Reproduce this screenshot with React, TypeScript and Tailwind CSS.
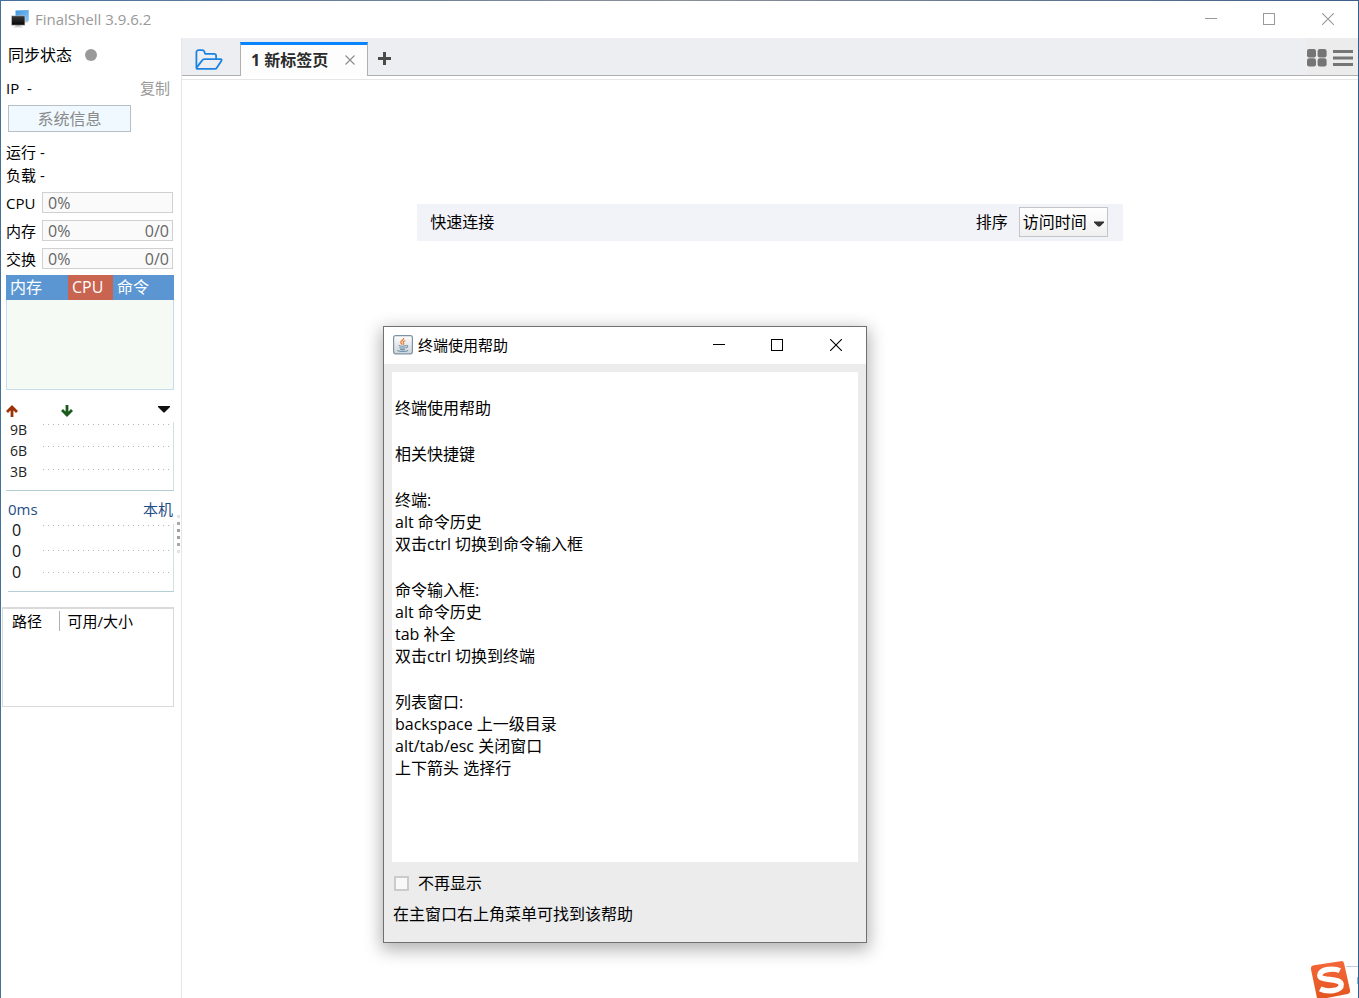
import React from 'react';

const HELP_GROUPS: string[][] = [
  ['终端使用帮助'],
  ['相关快捷键'],
  ['终端:', 'alt 命令历史', '双击ctrl 切换到命令输入框'],
  ['命令输入框:', 'alt 命令历史', 'tab 补全', '双击ctrl 切换到终端'],
  ['列表窗口:', 'backspace 上一级目录', 'alt/tab/esc 关闭窗口', '上下箭头 选择行'],
];

function MinimizeIcon() {
  return (
    <svg width="12" height="12" viewBox="0 0 12 12" aria-hidden="true" shapeRendering="crispEdges">
      <path d="M0 5.5h12" stroke="currentColor" />
    </svg>
  );
}

function MaximizeIcon() {
  return (
    <svg width="12" height="12" viewBox="0 0 12 12" aria-hidden="true" shapeRendering="crispEdges">
      <rect x="0.5" y="0.5" width="11" height="11" fill="none" stroke="currentColor" />
    </svg>
  );
}

function CloseIcon() {
  return (
    <svg width="12" height="12" viewBox="0 0 12 12" aria-hidden="true">
      <path d="M0 0l12 12M12 0L0 12" stroke="currentColor" strokeWidth="1.1" />
    </svg>
  );
}

function WindowControls({ title }: { title: string }) {
  return (
    <div className="flex h-full">
      <button type="button" aria-label={`最小化 ${title}`} className="flex w-[58px] items-center justify-center">
        <MinimizeIcon />
      </button>
      <button type="button" aria-label={`最大化 ${title}`} className="flex w-[58px] items-center justify-center">
        <MaximizeIcon />
      </button>
      <button type="button" aria-label={`关闭 ${title}`} className="flex w-[60px] items-center justify-center">
        <CloseIcon />
      </button>
    </div>
  );
}

function AppLogo() {
  return (
    <svg width="18" height="18" viewBox="0 0 18 18" aria-hidden="true">
      <defs>
        <linearGradient id="backScreen" x1="0" y1="0" x2="1" y2="1">
          <stop offset="0" stopColor="#3f93dc" />
          <stop offset="1" stopColor="#8cc8f5" />
        </linearGradient>
        <linearGradient id="frontScreen" x1="0" y1="0" x2="0" y2="1">
          <stop offset="0" stopColor="#3a3a3a" />
          <stop offset="1" stopColor="#050505" />
        </linearGradient>
      </defs>
      <path d="M4.5 0.6L17.8 0v11.2L14 11.6 4.5 10z" fill="url(#backScreen)" />
      <path d="M14 11.4h3v1h-3z" fill="#b5b5b5" />
      <path d="M0.5 5.8h13.4v9.4H0.5z" fill="url(#frontScreen)" stroke="#dadada" strokeWidth="0.5" />
      <path d="M5 15.3h4l1 1.2H4z" fill="#9a9a9a" />
      <path d="M2.5 17h9.5" stroke="#d4d4d4" />
    </svg>
  );
}

function FolderIcon() {
  return (
    <svg width="28" height="22" viewBox="0 0 28 22" fill="none" stroke="#1c84e0" strokeWidth="1.8" strokeLinejoin="round" strokeLinecap="round" aria-hidden="true">
      <path d="M1.4 18.2V3.200a2 2 0 0 1 2-2h3.800c1.200 0 1.900 0.600 2.200 1.500l0.700 2.100h9a2 2 0 0 1 2 2v3" />
      <path d="M9.600 10.200h16c1 0 1.400 0.700 0.800 1.500l-4.700 7.300a2 2 0 0 1-1.600 0.900H2.600c-1 0-1.400-0.700-0.800-1.500l5.200-6.800A3 3 0 0 1 9.600 10.200z" />
    </svg>
  );
}

function GridIcon() {
  return (
    <svg width="20" height="18" viewBox="0 0 20 18" fill="#757575" aria-hidden="true">
      <rect x="0" y="0" width="9" height="8.4" rx="2.2" />
      <rect x="10.6" y="0" width="9" height="8.4" rx="2.2" />
      <rect x="0" y="9.2" width="9" height="8.2" rx="2.2" />
      <rect x="10.6" y="9.2" width="9" height="8.2" rx="2.2" />
    </svg>
  );
}

function MenuIcon() {
  return (
    <svg width="20" height="16" viewBox="0 0 20 16" fill="#757575" aria-hidden="true">
      <path d="M0 0h20v3H0zM0 6.500h20v3H0zM0 13h20v3H0z" />
    </svg>
  );
}

function JavaIcon() {
  return (
    <svg width="20" height="20" viewBox="0 0 20 20" fill="none" aria-hidden="true">
      <defs>
        <linearGradient id="javaTile" x1="0" y1="0" x2="0" y2="1">
          <stop offset="0" stopColor="#fdfdfd" />
          <stop offset="1" stopColor="#cfd5da" />
        </linearGradient>
      </defs>
      <rect x="0.6" y="0.6" width="18.8" height="18.2" rx="2" fill="url(#javaTile)" stroke="#7d93a5" strokeWidth="1.2" />
      <path d="M10.6 3c0.7 1.8-2.8 2.5-2.8 4.3 0 1.1 1 1.5 1.3 2.3M12.3 5.6c-2 0.7-2.8 1.5-1.8 2.6 0.6 0.7 0 1.2-0.4 1.6" stroke="#e8813a" strokeWidth="1.3" />
      <path d="M5.6 10.6c2.4 0.8 5.6 0.8 7.6 0M6.4 12.5c2 0.7 4.4 0.7 6.2 0M7 14.2c1.6 0.5 3.4 0.5 5 0M13.4 10.5c1.8-0.3 1.9 1.7-0.4 2.4M4.4 15.4c2.4 1.3 8.4 1.3 10.8 0" stroke="#6f92ab" strokeWidth="1.1" />
    </svg>
  );
}

function ImeBadge() {
  return (
    <svg width="49" height="38" viewBox="0 0 49 38" aria-hidden="true">
      <defs>
        <linearGradient id="imeTile" x1="0" y1="0" x2="0" y2="1">
          <stop offset="0" stopColor="#f4673a" />
          <stop offset="1" stopColor="#e4561f" />
        </linearGradient>
      </defs>
      <path d="M30 6.5h19V38H30z" fill="#fff" />
      <path d="M36 6.5h13" stroke="#b9cfe6" />
      <path d="M49 17h-1.500v7H49z" fill="#1a7fe0" />
      <path d="M4 5.2L30.500 1.200a3 3 0 0 1 3.600 2.200L40 30a3.400 3.400 0 0 1-2.600 4L17 38H7L1 9.400a3.600 3.600 0 0 1 3-4.200z" fill="url(#imeTile)" />
      <path d="M29.800 10.600C24 7.800 10.500 9 9.800 15.200C9.200 21.500 31 17.400 31.200 24.600C31.400 31.200 17 32.400 10.200 28.800" fill="none" stroke="#fff" strokeWidth="5.400" />
    </svg>
  );
}

function Arrow({ up }: { up: boolean }) {
  return (
    <svg width="12" height="12" viewBox="0 0 12 12" fill="none" stroke={up ? '#9c3206' : '#1b5a1b'} strokeWidth="2.800" aria-hidden="true">
      {up ? <path d="M6 12V2.500M1 7L6 2l5 5" /> : <path d="M6 0v9.500M1 5l5 5 5-5" />}
    </svg>
  );
}

function DotLines({ lines }: { lines: number[] }) {
  return (
    <svg className="h-full min-w-0 flex-1" aria-hidden="true" shapeRendering="crispEdges">
      {lines.map((y) => (
        <line key={y} x1="1" x2="128" y1={y + 0.5} y2={y + 0.5} stroke="#b4b4b4" strokeDasharray="1 4" />
      ))}
    </svg>
  );
}

function Meter({ label, value, detail }: { label: string; value: string; detail?: string }) {
  return (
    <div className="flex h-[21px] items-center">
      <span className="w-9 shrink-0 whitespace-nowrap text-[15px]">{label}</span>
      <div className="flex h-full flex-1 items-center justify-between border border-[#d0d0d0] bg-[#fafafa] pl-[5px] pr-[3px] text-base leading-[18px] text-[#666]">
        <span>{value}</span>
        <span>{detail}</span>
      </div>
    </div>
  );
}

function Sidebar() {
  return (
    <aside className="relative flex w-[181px] shrink-0 flex-col border-r border-[#e6e6e6] pl-[5px] pr-2 text-[15px] leading-[20px] text-black">
      <div className="mt-[7px] flex items-center gap-[13px] pl-[2px] text-base leading-[20px]">
        <span>同步状态</span>
        <span className="size-3 rounded-full bg-[#999]" />
      </div>
      <div className="mt-[13px] flex justify-between pr-[3px]">
        <span className="whitespace-pre">IP  -</span>
        <button type="button" className="text-[#999]">复制</button>
      </div>
      <button type="button" className="ml-[2px] mt-[7px] h-[27px] w-[123px] border border-[#b8bfc4] bg-[#f0f9ff] text-base leading-[20px] text-[#8a8a8a]">
        系统信息
      </button>
      <div className="mt-[10px]">运行 -</div>
      <div className="mt-[3px]">负载 -</div>
      <div className="mt-[7px] flex flex-col gap-[7px]">
        <Meter label="CPU" value="0%" />
        <Meter label="内存" value="0%" detail="0/0" />
        <Meter label="交换" value="0%" detail="0/0" />
      </div>

      <div className="-mr-px mt-[6px] h-[115px] border border-t-0 border-[#c8dcec] bg-[#f5faf5]">
        <table className="-mx-px w-[168px] table-fixed border-collapse text-left text-base leading-[25px] text-white">
          <thead>
            <tr className="bg-[#5b96d2]">
              <th className="w-[62px] p-0 pl-1 font-normal">内存</th>
              <th className="w-[45px] bg-[#c96450] p-0 pl-1 font-normal">CPU</th>
              <th className="p-0 pl-1 font-normal">命令</th>
            </tr>
          </thead>
        </table>
      </div>

      <div className="mt-[15px] flex h-3 items-center">
        <Arrow up />
        <span className="w-[43px]" />
        <Arrow up={false} />
        <button type="button" aria-label="选择网卡" className="ml-auto mr-[3px] pb-[2px]">
          <svg width="12" height="10" viewBox="0 0 12 10" aria-hidden="true">
            <path d="M0 1h12v1L6.500 7.500h-1L0 2z" fill="#111" />
          </svg>
        </button>
      </div>
      <div className="-mr-px mt-[5px] flex h-[69px] border-b border-r border-[#b4ced6] border-r-[#d3e0e5] text-[14px] leading-[21px] text-[#222]">
        <div className="-mt-[3px] w-9 pl-1">
          <div>9B</div>
          <div>6B</div>
          <div>3B</div>
        </div>
        <DotLines lines={[2, 24, 47]} />
      </div>

      <div className="mt-[8px] flex justify-between pl-[2px] text-[15px] text-[#1f4e86]">
        <span>0ms</span>
        <span>本机</span>
      </div>
      <div className="-mr-px ml-[2px] mt-[5px] flex h-[68px] border-b border-r border-[#b4ced6] border-r-[#d3e0e5] text-base font-medium leading-[21px] text-[#111]">
        <div className="-mt-[4px] w-[34px] pl-1">
          <div>0</div>
          <div>0</div>
          <div>0</div>
        </div>
        <DotLines lines={[1, 26, 48]} />
      </div>

      <div className="-ml-1 -mr-px mt-[15px] h-[100px] border border-t-2 border-[#dadada]">
        <table className="mt-[2px] w-full table-fixed border-collapse text-left text-[15px] leading-[20px]">
          <thead>
            <tr>
              <th className="w-[56px] border-r border-[#b0b0b0] p-0 pl-[9px] font-normal">路径</th>
              <th className="p-0 pl-2 font-normal">可用/大小</th>
            </tr>
          </thead>
        </table>
      </div>

      <div className="absolute right-[1px] top-[477px] flex flex-col gap-1">
        <span className="size-[3px] bg-[#e4e4e4]" />
        <span className="size-[3px] bg-[#a8a8a8]" />
        <span className="size-[3px] bg-[#a0a0a0]" />
        <span className="size-[3px] bg-[#a0a0a0]" />
        <span className="size-[3px] bg-[#a8a8a8]" />
        <span className="size-[3px] bg-[#e4e4e4]" />
      </div>
    </aside>
  );
}

function TabBar() {
  return (
    <div className="flex h-[38px] items-stretch bg-[#edeef2]">
      <button type="button" aria-label="打开" className="flex w-[58px] items-center border-b border-[#b0b0b0] pl-[13px] pt-[6px]">
        <FolderIcon />
      </button>
      <div className="mt-1 flex w-[128px] items-center border-x border-t-[3px] border-x-[#b0b0b0] border-t-[#0a84ff] bg-[#fdfdfd] pb-[2px] pl-[10px] text-base font-bold text-[#2b2b2b]">
        <a href="#tab-1" className="whitespace-nowrap leading-[20px]">1 新标签页</a>
        <button type="button" aria-label="关闭标签" className="ml-auto mr-3 text-[#8e8e8e]">
          <svg width="10" height="10" viewBox="0 0 10 10" aria-hidden="true">
            <path d="M0.500 0.500l9 9M9.500 0.500l-9 9" stroke="currentColor" strokeWidth="1.200" />
          </svg>
        </button>
      </div>
      <div className="flex flex-1 items-center border-b border-[#b0b0b0] pl-[10px] pt-1">
        <button type="button" aria-label="新建标签" className="text-[#4a4a4a]">
          <svg width="13" height="13" viewBox="0 0 13 13" aria-hidden="true">
            <path d="M5 0h3v5h5v3H8v5H5V8H0V5h5z" fill="currentColor" />
          </svg>
        </button>
      </div>
      <div className="flex items-center gap-[6px] border-b border-[#b0b0b0] bg-[#ececec] pr-[5px] pt-[2px]">
        <button type="button" aria-label="布局">
          <GridIcon />
        </button>
        <button type="button" aria-label="菜单">
          <MenuIcon />
        </button>
      </div>
    </div>
  );
}

function HelpDialog() {
  return (
    <div role="dialog" aria-labelledby="help-title" className="absolute left-[382px] top-[326px] w-[484px] border border-[#707070] bg-[#ececec] text-black shadow-[0_5px_16px_2px_rgba(0,0,0,0.3)]">
      <div className="flex h-[37px] items-center justify-between bg-white pb-[2px] pl-[9px]">
        <div className="flex items-center gap-[5px]">
          <JavaIcon />
          <h1 id="help-title" className="text-[15px] leading-[20px]">终端使用帮助</h1>
        </div>
        <WindowControls title="帮助" />
      </div>
      <div className="mx-2 mt-2 flex flex-col gap-6 bg-white px-[3px] pb-[83px] pt-[25px] text-base leading-[22px]">
        {HELP_GROUPS.map((group) => (
          <div key={group[0]}>
            {group.map((line) => (
              <p key={line}>{line}</p>
            ))}
          </div>
        ))}
      </div>
      <div className="flex flex-col gap-[9px] px-[9px] pb-[17px] pt-[10px] text-base leading-[22px]">
        <label className="flex items-center gap-[9px] pl-px">
          <input type="checkbox" className="size-[15px] appearance-none border-2 border-[#cbcbcb] bg-[#f8f8f8]" />
          <span>不再显示</span>
        </label>
        <p>在主窗口右上角菜单可找到该帮助</p>
      </div>
    </div>
  );
}

export default function App() {
  return (
    <div className="relative flex min-h-screen flex-col overflow-hidden border-x border-l-[#46709c] border-r-[#2f5f8c] bg-white font-['Open_Sans','Noto_Sans_CJK_SC',sans-serif]">
      <div className="h-px bg-linear-to-r from-[#46709c] via-[#8a8f98] to-[#3d5f8a]" />
      <header className="flex h-[37px] items-center justify-between pb-[2px] pl-[10px] text-[#999]">
        <div className="flex items-center gap-[6px]">
          <AppLogo />
          <span className="text-[15px] leading-[20px]">FinalShell 3.9.6.2</span>
        </div>
        <WindowControls title="FinalShell" />
      </header>
      <div className="flex flex-1">
        <Sidebar />
        <main className="flex min-w-0 flex-1 flex-col">
          <TabBar />
          <div className="mt-[3px] flex-1 border-t border-[#e6e6e6]">
            <section className="mx-auto mt-[124px] flex h-[37px] w-3/5 items-center bg-[#f2f3f8] pb-px pl-[13px] pr-[15px] text-base leading-[22px] text-black">
              <h2>快速连接</h2>
              <label htmlFor="sort" className="ml-auto mr-[11px]">排序</label>
              <div className="relative">
                <select id="sort" className="block h-[30px] w-[89px] appearance-none border border-[#c4c4c4] bg-linear-to-b from-white to-[#f0f0f0] pl-[3px] text-base leading-[22px]">
                  <option>访问时间</option>
                </select>
                <svg className="pointer-events-none absolute right-1 top-[14px]" width="10" height="6" viewBox="0 0 10 6" aria-hidden="true">
                  <path d="M0 0.500h10v1L6 5.500H4l-4-4z" fill="#333" />
                </svg>
              </div>
            </section>
          </div>
        </main>
      </div>
      <HelpDialog />
      <div className="absolute -right-px bottom-0">
        <ImeBadge />
      </div>
    </div>
  );
}
